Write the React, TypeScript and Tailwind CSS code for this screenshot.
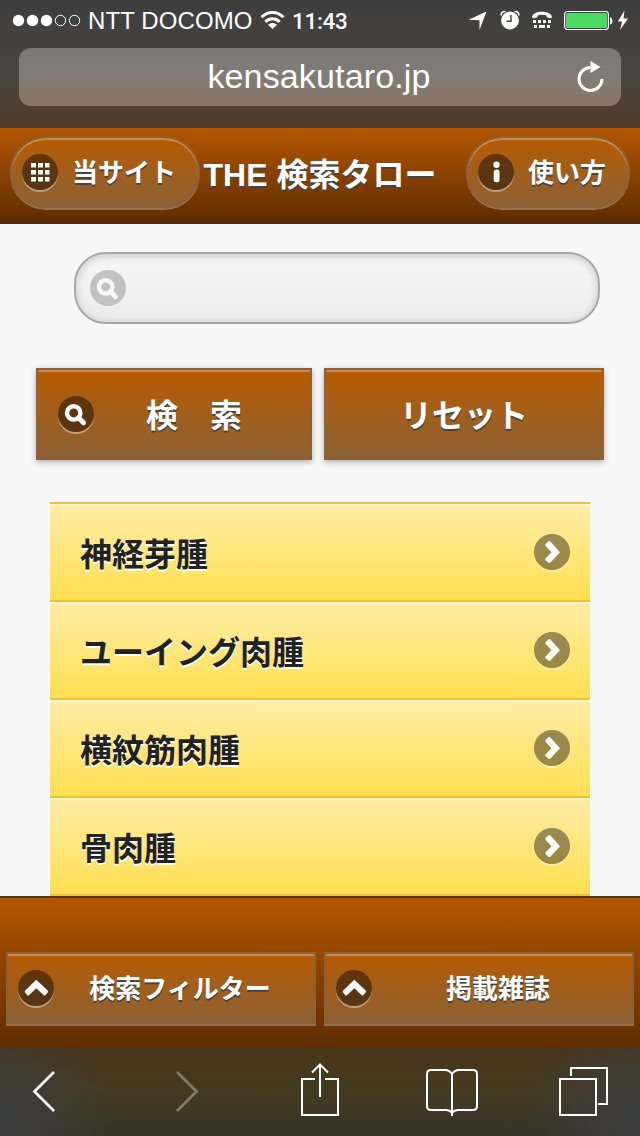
import type { ReactNode } from "react";

const jp = "font-['Liberation_Sans','Noto_Sans_CJK_JP',sans-serif] font-bold";
const brownFill = "border-2 border-[#8c6038] bg-linear-to-b/srgb from-[#b85a00] to-[#8b6237] bg-origin-border";
const barFill = "bg-linear-to-b/srgb from-[#b35600] to-[#5f2d00]";
const lightText = "text-white [text-shadow:0_2px_0_#444]";

function Disc({ children, tone = "dark" }: { children: ReactNode; tone?: "dark" | "row" | "light" }) {
  const tones = {
    dark: "bg-black/43 shadow-[0_2px_0_rgba(255,255,255,0.4)]",
    row: "bg-black/40 shadow-[0_2px_0_rgba(255,255,255,0.4)]",
    light: "bg-[#c2c2c2]",
  };
  return (
    <span className={`block size-9 shrink-0 rounded-full ${tones[tone]}`}>
      <svg viewBox="0 0 36 36" className="size-9">{children}</svg>
    </span>
  );
}

const Glass = ({ color = "#fff" }: { color?: string }) => (
  <g fill="none" stroke={color}>
    <circle cx="15.700" cy="16.900" r="6.700" strokeWidth="4.400" />
    <path d="M20.800 22l4.700 4.700" strokeWidth="5" strokeLinecap="round" />
  </g>
);
const Up = () => (
  <path d="M18.300 9.800L29.700 20.500Q30.500 21.500 29.500 22.700L27.500 25Q26.500 26 25.500 25L18.300 18.300L11.200 25Q10.200 26 9.200 25L7.200 22.700Q6.200 21.500 7.200 20.500Z" fill="#fff" />
);
const Right = () => (
  <path d="M26 18.300L16.500 28.500Q15.500 29.500 14.300 28.500L11.700 26.300Q10.700 25.300 11.700 24.300L17.500 18.300L11.700 12Q10.700 11 11.700 10L14.300 7.500Q15.500 6.500 16.500 7.500Z" fill="#fff" />
);

function StatusBar() {
  return (
    <div className="flex h-10 items-center pl-3 font-['Liberation_Sans',sans-serif] text-white">
      <svg width="70" height="14" viewBox="0 0 70 14" className="shrink-0">
        <g fill="#fff"><circle cx="6.5" cy="7.500" r="5.7" /><circle cx="20.5" cy="7.500" r="5.7" /><circle cx="34.5" cy="7.500" r="5.7" /></g>
        <g fill="none" stroke="#fff"><circle cx="48.5" cy="7.500" r="5.2" /><circle cx="62.5" cy="7.500" r="5.2" /></g>
      </svg>
      <span className="ml-[6px] w-[165px] whitespace-nowrap pt-[2px] text-2xl leading-none tracking-[0.1px]">NTT DOCOMO</span>
      <svg width="26" height="20" viewBox="0 0 26 20" className="ml-[7px] shrink-0" fill="none" stroke="#fff" strokeWidth="3">
        <path d="M1.5 7.3C8 .8 17 .8 23.500 7.3" /><path d="M5.300 11.800C9.500 7.800 15.500 7.800 19.700 11.800" />
        <path d="M8 14.800C10.500 12.300 14.500 12.300 17 14.800L12.500 19Z" fill="#fff" stroke="none" />
      </svg>
      <span className="ml-[6px] w-[56px] whitespace-nowrap pt-[2px] font-['Roboto',sans-serif] text-[22.500px] font-medium leading-none tracking-[-0.3px]">11:43</span>
      <svg width="20" height="20" viewBox="0 0 20 20" className="ml-[120px] shrink-0"><path d="M18.500 1.500L11.500 20V10.200L.5 9.700Z" fill="#fff" /></svg>
      <svg width="20" height="20" viewBox="0 0 20 20" className="ml-[12px] shrink-0">
        <circle cx="10" cy="10.500" r="8.900" fill="#fff" /><path d="M1.300 5.500C.5 3 3.200.8 5.500 1.800M18.700 5.500C19.500 3 16.800.8 14.500 1.800" fill="none" stroke="#fff" strokeWidth="1.500" />
        <path d="M11 5v6.200H6.500" fill="none" stroke="#484848" strokeWidth="1.500" />
      </svg>
      <svg width="20" height="18" viewBox="0 0 20 18" className="ml-[12px] shrink-0" fill="#fff">
        <path d="M0 6.500C0-1.200 20-1.200 20 6.500Q17.500 8 14.500 6V4.500C11.500 3.600 8.500 3.600 5.500 4.500V6Q2.500 8 0 6.500Z" />
        <path d="M1 9h3v3H1zM6 9h3v3H6zM11 9h3v3h-3zM16 9h3v3h-3zM2 14h3v3H2zM7 14h6v3H7zM15 14h3v3h-3z" />
      </svg>
      <svg width="50" height="20" viewBox="0 0 50 20" className="ml-[12px] shrink-0">
        <rect x=".6" y="1.500" width="43.800" height="18" rx="2.800" fill="none" stroke="#fff" strokeWidth="1.200" />
        <rect x="2" y="3" width="41" height="15" rx="1.500" fill="#4cd964" /><path d="M46 7.500c3.300 0 3.300 7 0 7Z" fill="#fff" />
      </svg>
      <svg width="12" height="20" viewBox="0 0 12 20" className="ml-[3px] shrink-0"><path d="M7.500 .5L.8 11.500H5L3 20L11 8.500H6.500Z" fill="#fff" /></svg>
    </div>
  );
}

function PillButton({ label, children }: { label: string; children: ReactNode }) {
  return (
    <button className={`${jp} ${brownFill} ${lightText} flex h-[72px] items-center gap-[14px] rounded-[36px] pl-[10px] pr-[22px] text-[26px] shadow-[inset_0_2px_0_rgba(255,255,255,0.3),0_2px_0_rgba(255,255,255,0.3)]`}>
      <Disc>{children}</Disc>
      <span className="whitespace-nowrap pt-[2px] leading-none">{label}</span>
    </button>
  );
}

function FooterButton({ label }: { label: string }) {
  return (
    <button className={`${jp} ${brownFill} ${lightText} flex h-[72px] flex-1 items-center pl-[10px] text-[26px] shadow-[inset_0_2px_0_rgba(255,255,255,0.3),0_2px_0_rgba(255,255,255,0.3)]`}>
      <Disc><Up /></Disc>
      <span className="flex-1 pr-2 pt-[2px] leading-none">{label}</span>
    </button>
  );
}

const conditions = ["神経芽腫", "ユーイング肉腫", "横紋筋肉腫", "骨肉腫"];

export default function App() {
  return (
    <div className="flex h-[1136px] w-[640px] flex-col overflow-hidden bg-[#f8f8f8]">
      <div className="h-32 shrink-0 bg-linear-to-b/srgb from-[#3e3e3e] via-[#484644] via-55% to-[#523d2c]">
        <StatusBar />
        <div className="mx-[19px] mt-2 flex h-[58px] items-center rounded-[12px] bg-linear-to-b/srgb from-[#7a7978] via-[#817b77] to-[#887564] pr-4 text-white">
          <span className="flex-1 pb-[2px] pl-[42px] text-center font-['Liberation_Sans',sans-serif] text-[34px] leading-none tracking-[0.15px]">kensakutaro.jp</span>
          <svg width="28" height="32" viewBox="0 0 28 32"><path d="M13.500 6.500A11.500 11.500 0 1 0 25 18" fill="none" stroke="#fff" strokeWidth="3" /><path d="M13.500 0L23.500 6L13.500 12Z" fill="#fff" /></svg>
        </div>
      </div>

      <header className={`${barFill} flex h-24 shrink-0 items-start justify-between border-b-2 border-[#532d12] px-[10px] pt-2`}>
        <PillButton label="当サイト">
          <path fill="#fff" d="M9 9h5v4.500H9zM16 9h5v4.500h-5zM23 9h4.500v4.500H23zM9 16h5v4.500H9zM16 16h5v4.500h-5zM23 16h4.500v4.500H23zM9 23h5v4.500H9zM16 23h5v4.500h-5zM23 23h4.500v4.500H23z" />
        </PillButton>
        <h1 className={`${jp} ${lightText} -ml-[26px] pt-[23px] text-[32px] leading-none whitespace-nowrap`}>THE 検索タロー</h1>
        <PillButton label="使い方">
          <circle cx="18.500" cy="10.800" r="3.200" fill="#fff" /><rect x="15.700" y="15.500" width="5.800" height="12.800" rx="2.500" fill="#fff" />
        </PillButton>
      </header>

      <main className="min-h-0 flex-1 overflow-hidden">
        <label className="mr-10 ml-[74px] mt-7 flex h-[72px] items-center rounded-[32px] border-2 border-[#a8a8a8] bg-linear-to-b/srgb from-[#f8f8f8] to-[#ebebeb] px-[14px] shadow-[inset_0_2px_8px_rgba(0,0,0,0.2)]">
          <Disc tone="light"><Glass color="#f8f8f8" /></Disc>
          <input className="min-w-0 flex-1 bg-transparent outline-none" />
        </label>
        <div className="mx-9 mt-11 flex gap-3">
          <button className={`${jp} ${brownFill} ${lightText} flex h-[92px] w-[276px] items-center pl-5 text-[32px] shadow-[inset_0_2px_0_rgba(255,255,255,0.3),0_2px_6px_rgba(0,0,0,0.3)]`}>
            <Disc><Glass /></Disc>
            <span className="flex-1 pr-4 pt-1 leading-none">検　索</span>
          </button>
          <button className={`${jp} ${brownFill} ${lightText} h-[92px] w-[280px] pt-1 text-[32px] leading-none shadow-[inset_0_2px_0_rgba(255,255,255,0.3),0_2px_6px_rgba(0,0,0,0.3)]`}>リセット</button>
        </div>
        <ul className="mx-[50px] mt-[42px]">
          {conditions.map((name) => (
            <li key={name} className={`${jp} flex h-[98px] items-center justify-between border-t-2 border-[#edc13c] bg-linear-to-b/srgb from-[#ffeda8] to-[#ffdf50] pr-5 pl-[30px] text-[32px] text-[#222] shadow-[inset_0_2px_0_rgba(255,255,255,0.4)] [text-shadow:0_2px_0_#fff]`}>
              <span className="pt-[6px] leading-none">{name}</span>
              <Disc tone="row"><Right /></Disc>
            </li>
          ))}
          <li className="h-[2px] bg-[#edc13c]" />
        </ul>
      </main>

      <footer className={`${barFill} flex h-[152px] shrink-0 items-start gap-2 border-t-2 border-[#5c3210] px-[6px] pt-[54px]`}>
        <FooterButton label="検索フィルター" />
        <FooterButton label="掲載雑誌" />
      </footer>

      <nav className="flex h-[88px] shrink-0 items-start bg-[radial-gradient(circle_at_0%_75%,#3d3e40,transparent_110px),radial-gradient(circle_at_100%_75%,#3d3e40,transparent_110px),linear-gradient(#47341b,#443a20_45%,#353429)] pt-3">
        <svg width="24" height="64" viewBox="0 0 24 64" className="ml-[31px]"><path d="M23 12L3.500 31.500L23 51" fill="none" stroke="#fff" strokeWidth="2.800" /></svg>
        <svg width="24" height="64" viewBox="0 0 24 64" className="ml-[120px]"><path d="M2 12L21.500 31.500L2 51" fill="none" stroke="#827b6a" strokeWidth="2.800" /></svg>
        <svg width="40" height="64" viewBox="0 0 40 64" className="ml-[101px]" fill="none" stroke="#fff" strokeWidth="2"><path d="M15 19H2v36h36V19H25M20 37V5M12 12.500L20 4.500L28 12.500" /></svg>
        <svg width="54" height="64" viewBox="0 0 54 64" className="ml-[85px]" fill="none" stroke="#fff" strokeWidth="2"><path d="M27 56V14C25 11 23 10 20 10H6Q2 10 2 14V46Q2 50 6 50H21Q25 50 27 53Q29 50 33 50H48Q52 50 52 46V14Q52 10 48 10H34C31 10 29 11 27 14" /></svg>
        <svg width="52" height="64" viewBox="0 0 52 64" className="ml-[78px]" fill="none" stroke="#fff" strokeWidth="2"><path d="M3 19h36v36H3zM14 16V8h36v36h-9" /></svg>
      </nav>
    </div>
  );
}
